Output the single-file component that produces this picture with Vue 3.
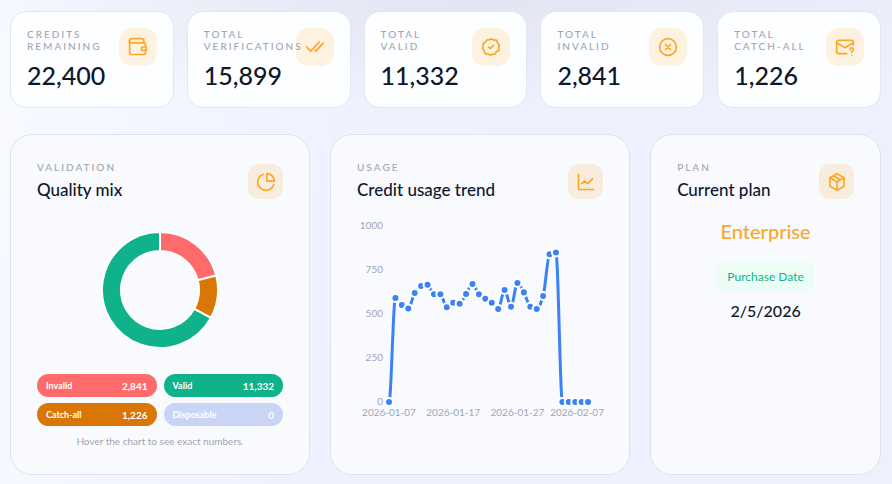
<template>
  <main class="dashboard">
    <section class="stats">
      <article v-for="stat in stats" :key="stat.label" class="stat-card">
        <div class="stat-card__text">
          <h2 class="eyebrow">{{ stat.label }}</h2>
          <p class="stat-card__value">{{ stat.value }}</p>
        </div>
        <span class="icon-badge icon-badge--stat">
          <svg class="icon" viewBox="0 0 24 24" aria-hidden="true">
            <path v-for="d in stat.icon" :key="d" :d="d" />
          </svg>
        </span>
      </article>
    </section>

    <section class="panels">
      <article class="panel">
        <header class="panel__header">
          <div>
            <p class="eyebrow">Validation</p>
            <h2 class="panel__title">Quality mix</h2>
          </div>
          <span class="icon-badge">
            <svg class="icon" viewBox="0 0 24 24" aria-hidden="true">
              <path d="M13 2a9 9 0 0 1 9 9h-9z M8.500 3A9.800 9.800 0 1 0 21.300 15" />
            </svg>
          </span>
        </header>
        <svg class="donut" viewBox="0 0 120 120" role="img" aria-label="Quality mix">
          <path v-for="slice in slices" :key="slice.color" :d="slice.d" :fill="slice.color" />
        </svg>
        <ul class="legend">
          <li v-for="item in legend" :key="item.label" class="legend__item" :class="item.type">
            <span>{{ item.label }}</span>
            <span class="legend__value">{{ item.value }}</span>
          </li>
        </ul>
        <p class="hint">Hover the chart to see exact numbers.</p>
      </article>

      <article class="panel">
        <header class="panel__header">
          <div>
            <p class="eyebrow">Usage</p>
            <h2 class="panel__title">Credit usage trend</h2>
          </div>
          <span class="icon-badge">
            <svg class="icon" viewBox="0 0 24 24" aria-hidden="true">
              <path d="M3 3v17a1 1 0 0 0 1 1h17 M7 14l3-3 4 3 6-6" />
            </svg>
          </span>
        </header>
        <svg class="trend" viewBox="0 0 246 204" role="img" aria-label="Credit usage trend">
          <text v-for="tick in yTicks" :key="tick" class="tick tick--y" x="26" :y="yOf(tick) + 3">{{ tick }}</text>
          <path class="trend__line" :d="linePath" />
          <circle v-for="(p, i) in points" :key="i" class="trend__dot" :cx="p.x" :cy="p.y" r="4" />
          <text v-for="tick in xTicks" :key="tick.label" class="tick" :x="tick.x" y="200">{{ tick.label }}</text>
        </svg>
      </article>

      <article class="panel">
        <header class="panel__header">
          <div>
            <p class="eyebrow">Plan</p>
            <h2 class="panel__title">Current plan</h2>
          </div>
          <span class="icon-badge">
            <svg class="icon" viewBox="0 0 24 24" aria-hidden="true">
              <path d="M12 2l8.500 4.800v10.400L12 22l-8.500-4.800V6.800z M3.700 7L12 12l8.300-5 M12 12v10 M7.700 4.500l8.500 5" />
            </svg>
          </span>
        </header>
        <div class="plan">
          <p class="plan__name">Enterprise</p>
          <span class="plan__badge">Purchase Date</span>
          <p class="plan__date">2/5/2026</p>
        </div>
      </article>
    </section>
  </main>
</template>

<script setup>
const stats = [
  {
    label: 'Credits Remaining',
    value: '22,400',
    icon: [
      'M19 7V4a2 2 0 0 0-2-2H4a2 2 0 0 0 0 5h15a2 2 0 0 1 2 2v2',
      'M2 4.500V19a2 2 0 0 0 2 2h15a2 2 0 0 0 2-2v-2',
      'M22 12h-4a2 2 0 0 0 0 4h4z'
    ]
  },
  {
    label: 'Total Verifications',
    value: '15,899',
    icon: ['M2 12l5 5L17 6', 'M12 16l1 1L22 7']
  },
  {
    label: 'Total Valid',
    value: '11,332',
    icon: [
      'M12 2l3 1.500 3.500.3 1.200 3.200L22 9.500 21.300 12.500 21.500 16l-3 1.800L16.500 20.700 13.500 20.700 11 22 8.500 20.300 5 20l-1.200-3.200L2 14l.7-3L2.500 7.800l3-1.800L7.500 3.300l3 0z',
      'M9 12l2 2 4-4'
    ]
  },
  {
    label: 'Total Invalid',
    value: '2,841',
    icon: ['M12 2a10 10 0 1 0 0 20a10 10 0 1 0 0-20', 'M9 9l6 6M15 9l-6 6']
  },
  {
    label: 'Total Catch-all',
    value: '1,226',
    icon: [
      'M14 20H4a2 2 0 0 1-2-2V6a2 2 0 0 1 2-2h16a2 2 0 0 1 2 2v4',
      'M2 7l10 6L22 7',
      'M18 15a2 2 0 1 1 3 1.700c-.7.4-1 .8-1 1.500M20 22v.01'
    ]
  }
]

const legend = [
  { label: 'Invalid', value: '2,841', type: 'invalid' },
  { label: 'Valid', value: '11,332', type: 'valid' },
  { label: 'Catch-all', value: '1,226', type: 'catch-all' },
  { label: 'Disposable', value: '0', type: 'disposable' }
]

// donut, clockwise from the top
const shares = [
  { share: 0.21, color: '#ff6b6b' },
  { share: 0.12, color: '#d97706' },
  { share: 0.67, color: '#10b28c' }
]

function polar(r, turn) {
  const a = turn * Math.PI * 2
  return `${60 + r * Math.sin(a)} ${60 - r * Math.cos(a)}`
}

let turn = 0
const slices = shares.map(({ share, color }) => {
  const from = turn
  const to = turn + share
  const large = share > 0.5 ? 1 : 0
  turn = to
  return {
    color,
    d: `M${polar(58, from)} A58 58 0 ${large} 1 ${polar(58, to)} L${polar(39, to)} A39 39 0 ${large} 0 ${polar(39, from)} Z`
  }
})

// daily credits, 2026-01-07 to 2026-02-07
const usage = [
  0, 591, 551, 532, 619, 659, 667, 612, 612, 538, 564, 559, 614, 670, 612, 587,
  564, 528, 636, 542, 676, 623, 542, 528, 602, 839, 850, 0, 0, 0, 0, 0
]
const yTicks = [1000, 750, 500, 250, 0]
const step = 199 / 31
const xOf = (i) => 32 + i * step
const yOf = (v) => 186 - v * 0.176

const points = usage.map((v, i) => ({ x: xOf(i), y: yOf(v) }))
const xTicks = [
  { label: '2026-01-07', x: xOf(0) },
  { label: '2026-01-17', x: xOf(10) },
  { label: '2026-01-27', x: xOf(20) },
  { label: '2026-02-07', x: 220 }
]

// monotone curve: flat at every peak and valley
const slopes = points.map((p, i) => {
  if (i === 0 || i === points.length - 1) return 0
  const a = (p.y - points[i - 1].y) / step
  const b = (points[i + 1].y - p.y) / step
  return a * b <= 0 ? 0 : (2 * a * b) / (a + b)
})
const linePath = points.reduce((path, p, i) => {
  if (i === 0) return `M${p.x} ${p.y}`
  const prev = points[i - 1]
  const third = step / 3
  return `${path} C${prev.x + third} ${prev.y + slopes[i - 1] * third} ${p.x - third} ${p.y - slopes[i] * third} ${p.x} ${p.y}`
}, '')
</script>

<style>
body {
  margin: 0;
  background: #edf1fe;
}
</style>

<style scoped>
.dashboard {
  min-height: 100vh;
  box-sizing: border-box;
  padding: 11px 11px 9px 10px;
  background:
    radial-gradient(ellipse 60% 110px at 55% 0, #e2e6f2, rgba(226, 230, 242, 0)),
    linear-gradient(100deg, #f8faff, #eef2ff 40%, #edf1fe);
  color: #0f172a;
  font-family: Lato, "Noto Sans", sans-serif;
}
h2,
p,
ul {
  margin: 0;
  padding: 0;
}
.stats {
  display: grid;
  grid-template-columns: repeat(5, minmax(0, 1fr));
  gap: 13px;
  margin-bottom: 26px;
}
.stat-card {
  display: flex;
  align-items: flex-start;
  gap: 12px;
  padding: 16px;
  background: #fdfeff;
  border: 1px solid #e2e6f0;
  border-radius: 16px;
}
.stat-card__text {
  flex: 1;
  min-width: 0;
}
.stat-card__value {
  margin: 9px 0 2px;
  font-size: 25px;
  font-weight: 500;
  line-height: 28px;
}
.eyebrow {
  color: #a0a5b5;
  font-size: 10px;
  font-weight: 500;
  line-height: 12px;
  letter-spacing: 2px;
  text-transform: uppercase;
}
.icon-badge {
  display: flex;
  flex-shrink: 0;
  align-items: center;
  justify-content: center;
  width: 35px;
  height: 35px;
  border-radius: 11px;
  background: #f8eddc;
}
.icon-badge--stat {
  width: 38px;
  height: 38px;
  border-radius: 13px;
  background: rgba(255, 167, 38, 0.15);
}
.icon {
  width: 20px;
  height: 20px;
  fill: none;
  stroke: #fca728;
  stroke-width: 2;
  stroke-linecap: round;
  stroke-linejoin: round;
}
.panels {
  display: grid;
  grid-template-columns: minmax(0, 13fr) minmax(0, 13fr) minmax(0, 10fr);
  gap: 20px;
}
.panel {
  display: flex;
  flex-direction: column;
  padding: 26px;
  background: #f8fafe;
  border: 1px solid #dfe3ed;
  border-radius: 22px;
}
.panel__header {
  display: flex;
  align-items: center;
  justify-content: space-between;
}
.panel__title {
  margin-top: 5px;
  font-size: 17px;
  font-weight: 500;
  line-height: 24px;
}
.donut {
  width: 120px;
  height: 120px;
  margin: 28px auto 24px;
}
.donut path {
  stroke: #fff;
  stroke-width: 2;
}
.legend {
  display: grid;
  grid-template-columns: 1fr 1fr;
  gap: 6px 7px;
  list-style: none;
}
.legend__item {
  display: flex;
  align-items: center;
  justify-content: space-between;
  height: 23px;
  padding: 0 9px;
  border-radius: 12px;
  color: #fff;
  font-size: 9px;
  font-weight: 700;
}
.legend__value {
  font-size: 10px;
}
.invalid {
  background: #ff6b6b;
}
.valid {
  background: #10b28c;
}
.catch-all {
  background: #d97706;
}
.disposable {
  background: #cad5f6;
}
.hint {
  margin-top: 9px;
  color: #a0a5b5;
  font-size: 10px;
  line-height: 13px;
  text-align: center;
}
.trend {
  width: 100%;
  margin-top: 14px;
  overflow: visible;
}
.trend__line {
  fill: none;
  stroke: #3b82f6;
  stroke-width: 3;
}
.trend__dot {
  fill: #3b82f6;
  stroke: #fff;
  stroke-width: 2;
}
.tick {
  fill: #a0a5b5;
  font-size: 10px;
  text-anchor: middle;
}
.tick--y {
  text-anchor: end;
}
.plan {
  display: flex;
  flex-direction: column;
  align-items: center;
  padding-top: 16px;
}
.plan__name {
  color: #fca728;
  font-size: 20px;
  font-weight: 500;
  line-height: 26px;
}
.plan__badge {
  margin-top: 18px;
  padding: 0 10px;
  border-radius: 6px;
  background: #ecfdf5;
  color: #10b28c;
  font-size: 12px;
  line-height: 29px;
}
.plan__date {
  margin-top: 8px;
  font-size: 16px;
  font-weight: 500;
  line-height: 24px;
}
</style>
